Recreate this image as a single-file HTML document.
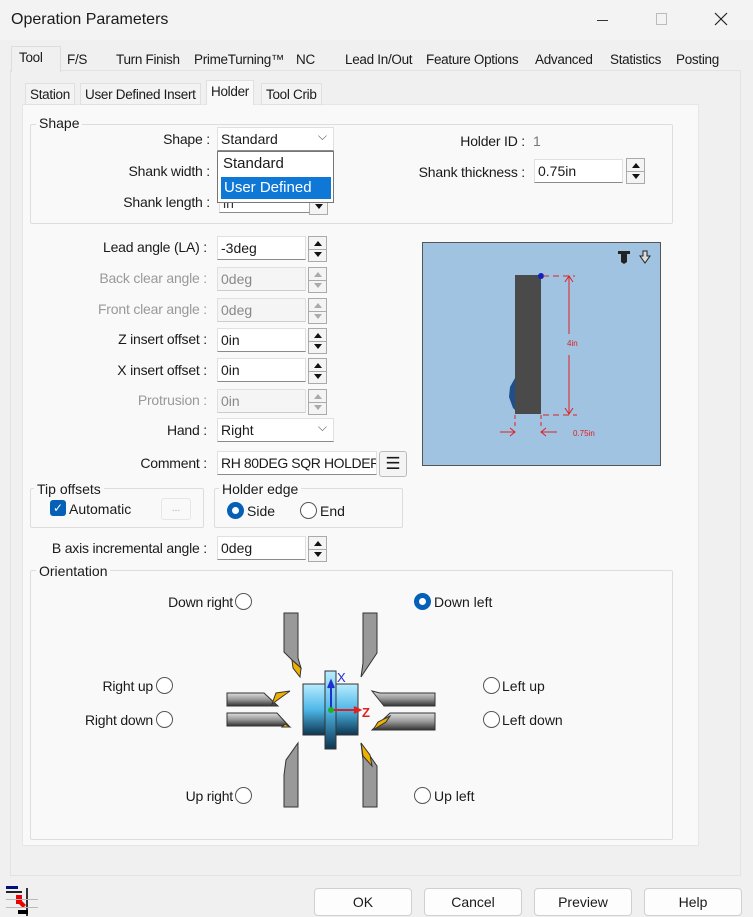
<!DOCTYPE html><html><head><style>
*{box-sizing:border-box}
body{margin:0;width:753px;height:917px;background:#f0f0f0;font-family:"Liberation Sans",sans-serif;font-size:14px;color:#1a1a1a;position:relative;overflow:hidden}
.a{position:absolute;white-space:nowrap}
.in{position:absolute;background:#fff;border:1px solid #e0e0e0;border-bottom:1px solid #8a8a8a;height:24px;padding:3px 3px;font-size:14px;white-space:nowrap;overflow:hidden}
.dis{background:#f5f5f5;color:#888;border-bottom-color:#ccc}
.sp{position:absolute;width:19px;height:26px;border:1px solid #aaa;background:#f4f4f4}
.sp:before,.sp:after{content:"";position:absolute;left:5px;border-left:4px solid transparent;border-right:4px solid transparent}
.sp:before{top:4px;border-bottom:5px solid #111}
.sp:after{bottom:4px;border-top:5px solid #111}
.sp i{position:absolute;left:0;right:0;top:12px;border-top:1px solid #aaa}
.sp.d:before{border-bottom-color:#aaa}.sp.d:after{border-top-color:#aaa}
.g{position:absolute;border:1px solid #ddd;border-radius:2px}
.gl{position:absolute;background:#f9f9f9;padding:0 3px;top:-10px;left:5px}
.rad{position:absolute;width:17px;height:17px;border-radius:50%;border:1px solid #555;background:#fff}
.rad.on{border:5px solid #0560b8}
.tab{position:absolute;top:49px;height:22px;padding:3px 4px;font-size:13.5px;letter-spacing:-0.3px}
.btn{position:absolute;top:888px;width:98px;height:28px;background:#fdfdfd;border:1px solid #d0d0d0;border-radius:4px;text-align:center;line-height:26px}
.lbl{position:absolute;text-align:right;white-space:nowrap;letter-spacing:-0.2px}
</style></head><body>
<div class="a" style="left:0;top:0;width:753px;height:40px;background:#f3f3f3"></div>
<div class="a" style="left:11px;top:11px;font-size:16px">Operation Parameters</div>
<div class="a" style="left:597px;top:20px;width:11px;border-top:1px solid #333"></div>
<div class="a" style="left:656px;top:13px;width:11px;height:12px;border:1px solid #bbb"></div>
<svg class="a" style="left:714px;top:12px" width="14" height="14"><path d="M1 1L13 13M13 1L1 13" stroke="#222" stroke-width="1.2"/></svg>

<div class="a" style="left:10px;top:70px;width:731px;height:806px;background:#f0f0f0;border:1px solid #e3e3e3"></div>
<div class="tab" style="left:11px;top:46px;height:26px;background:#f0f0f0;border:1px solid #ddd;border-bottom:none;padding-left:7px;width:50px">Tool</div>
<div class="tab" style="left:63px">F/S</div>
<div class="tab" style="left:112px">Turn Finish</div>
<div class="tab" style="left:190px">PrimeTurning™</div>
<div class="tab" style="left:292px">NC</div>
<div class="tab" style="left:341px">Lead In/Out</div>
<div class="tab" style="left:422px">Feature Options</div>
<div class="tab" style="left:531px">Advanced</div>
<div class="tab" style="left:606px">Statistics</div>
<div class="tab" style="left:672px">Posting</div>

<div class="a" style="left:22px;top:104px;width:677px;height:742px;background:#f9f9f9;border:1px solid #e6e6e6"></div>
<div class="tab" style="left:25px;top:83px;border:1px solid #e0e0e0;background:#f3f3f3">Station</div>
<div class="tab" style="left:80px;top:83px;border:1px solid #e0e0e0;background:#f3f3f3">User Defined Insert</div>
<div class="tab" style="left:206px;top:80px;height:25px;background:#f9f9f9;border:1px solid #e0e0e0;border-bottom:none">Holder</div>
<div class="tab" style="left:261px;top:83px;border:1px solid #e0e0e0;background:#f3f3f3">Tool Crib</div>

<div class="g" style="left:30px;top:124px;width:643px;height:100px"><div class="gl">Shape</div></div>
<div class="lbl" style="left:100px;width:110px;top:131px">Shape :</div>
<div class="in" style="left:217px;top:127px;width:117px">Standard<span style="position:absolute;right:6px;top:1px;font-size:12px;color:#555">⌵</span></div>
<div class="lbl" style="left:100px;width:110px;top:163px">Shank width :</div>
<div class="lbl" style="left:100px;width:110px;top:194px">Shank length :</div>
<div class="in" style="left:219px;top:191px;width:92px;height:22px;color:#333">in</div>
<div class="a" style="left:309px;top:197px;width:19px;height:18px;border:1px solid #aaa;background:#f4f4f4"><div style="position:absolute;left:5px;top:6px;border-left:4px solid transparent;border-right:4px solid transparent;border-top:5px solid #111"></div></div>
<div class="a" style="left:217px;top:151px;width:117px;height:52px;background:#fff;border:1px solid #777">
<div class="a" style="left:5px;top:3px;font-size:15px">Standard</div>
<div class="a" style="left:3px;top:25px;width:110px;height:22px;background:#0f78d7;color:#fff;font-size:15px;padding:2px 3px">User Defined</div></div>
<div class="lbl" style="left:420px;width:105px;top:133px">Holder ID :</div>
<div class="a" style="left:533px;top:133px;color:#777">1</div>
<div class="lbl" style="left:400px;width:125px;top:164px">Shank thickness :</div>
<div class="in" style="left:534px;top:159px;width:89px">0.75in</div>
<div class="sp" style="left:626px;top:158px"><i></i></div>

<div class="lbl" style="left:60px;width:147px;top:239px">Lead angle (LA) :</div>
<div class="in" style="left:217px;top:236px;width:89px">-3deg</div><div class="sp" style="left:308px;top:236px"><i></i></div>
<div class="lbl" style="left:60px;width:147px;top:270px;color:#999">Back clear angle :</div>
<div class="in dis" style="left:217px;top:267px;width:89px">0deg</div><div class="sp d" style="left:308px;top:267px"><i></i></div>
<div class="lbl" style="left:60px;width:147px;top:301px;color:#999">Front clear angle :</div>
<div class="in dis" style="left:217px;top:298px;width:89px">0deg</div><div class="sp d" style="left:308px;top:298px"><i></i></div>
<div class="lbl" style="left:60px;width:147px;top:331px">Z insert offset :</div>
<div class="in" style="left:217px;top:328px;width:89px">0in</div><div class="sp" style="left:308px;top:328px"><i></i></div>
<div class="lbl" style="left:60px;width:147px;top:362px">X insert offset :</div>
<div class="in" style="left:217px;top:358px;width:89px">0in</div><div class="sp" style="left:308px;top:358px"><i></i></div>
<div class="lbl" style="left:60px;width:147px;top:392px;color:#999">Protrusion :</div>
<div class="in dis" style="left:217px;top:389px;width:89px">0in</div><div class="sp d" style="left:308px;top:389px"><i></i></div>
<div class="lbl" style="left:60px;width:147px;top:422px">Hand :</div>
<div class="in" style="left:217px;top:418px;width:117px">Right<span style="position:absolute;right:6px;top:1px;font-size:12px;color:#555">⌵</span></div>
<div class="lbl" style="left:60px;width:147px;top:455px">Comment :</div>
<div class="in" style="left:217px;top:451px;width:160px;letter-spacing:-0.4px">RH 80DEG SQR HOLDER</div>
<div class="a" style="left:379px;top:451px;width:28px;height:26px;border:1px solid #bbb;background:#f4f4f4;border-radius:3px;text-align:center;font-size:17px;line-height:23px">☰</div>

<svg class="a" style="left:422px;top:242px" width="239" height="224">
<rect x="0.5" y="0.5" width="238" height="223" fill="#9fc3e0" stroke="#555"/>
<rect x="93" y="33" width="26" height="139" fill="#4a4a4a"/>
<path d="M93 136 L88 145 L87 155 L91 166 L93 168Z" fill="#1f4e8a"/>
<circle cx="119" cy="34" r="3" fill="#1020c0"/>
<g stroke="#e02020" fill="none" stroke-width="1">
<path d="M121 34 H153 M121 173 H155" stroke-dasharray="6 4"/>
<path d="M147 34 V92 M147 113 V172 M143 40 L147 34 L151 40 M143 166 L147 172 L151 166"/>
<path d="M93 173 V184 M119 173 V184" stroke-dasharray="4 3"/>
<path d="M78 190 H93 M88 186 L93 190 L88 194 M119 190 H135 M124 186 L119 190 L124 194"/></g>
<text x="145" y="104" font-size="8" fill="#e02020" font-family="Liberation Sans">4in</text>
<text x="151" y="194" font-size="8" fill="#e02020" font-family="Liberation Sans">0.75in</text>
<g fill="#222"><path d="M196 9 H208 V12 H205 V20 L202 22 L199 20 V12 H196Z"/><path d="M221 9 h4 v5 h3 l-5 7 -5 -7 h3z" fill="#ddd" stroke="#222"/></g>
</svg>

<div class="g" style="left:30px;top:488px;width:174px;height:40px"><div class="gl" style="left:3px;top:-8px">Tip offsets</div></div>
<div class="a" style="left:50px;top:500px;width:16px;height:16px;background:#0560b8;border-radius:3px;color:#fff;font-size:12px;text-align:center;line-height:16px">✓</div>
<div class="a" style="left:69px;top:501px">Automatic</div>
<div class="a" style="left:161px;top:498px;width:30px;height:22px;border:1px solid #e6e6e6;border-radius:3px;color:#aaa;font-size:10px;text-align:center;line-height:20px">...</div>
<div class="g" style="left:214px;top:488px;width:189px;height:40px"><div class="gl" style="left:4px;top:-8px">Holder edge</div></div>
<div class="rad on" style="left:227px;top:502px"></div><div class="a" style="left:247px;top:503px">Side</div>
<div class="rad" style="left:300px;top:502px"></div><div class="a" style="left:320px;top:503px">End</div>
<div class="lbl" style="left:40px;width:167px;top:540px">B axis incremental angle :</div>
<div class="in" style="left:217px;top:536px;width:89px">0deg</div><div class="sp" style="left:308px;top:536px"><i></i></div>

<div class="g" style="left:30px;top:570px;width:643px;height:270px"><div class="gl" style="left:5px;top:-8px">Orientation</div></div>
<div class="lbl" style="left:130px;width:103px;top:594px">Down right</div><div class="rad" style="left:235px;top:593px"></div>
<div class="rad on" style="left:414px;top:593px"></div><div class="a" style="left:434px;top:594px">Down left</div>
<div class="lbl" style="left:60px;width:93px;top:678px">Right up</div><div class="rad" style="left:156px;top:677px"></div>
<div class="lbl" style="left:60px;width:93px;top:712px">Right down</div><div class="rad" style="left:156px;top:711px"></div>
<div class="rad" style="left:483px;top:677px"></div><div class="a" style="left:502px;top:678px">Left up</div>
<div class="rad" style="left:483px;top:711px"></div><div class="a" style="left:502px;top:712px">Left down</div>
<div class="lbl" style="left:130px;width:103px;top:788px">Up right</div><div class="rad" style="left:235px;top:787px"></div>
<div class="rad" style="left:414px;top:787px"></div><div class="a" style="left:434px;top:788px">Up left</div>

<svg class="a" style="left:200px;top:580px" width="260" height="240">
<defs><linearGradient id="cy" x1="0" y1="0" x2="0" y2="1"><stop offset="0" stop-color="#b8ecff"/><stop offset="0.5" stop-color="#4fb8e8"/><stop offset="1" stop-color="#0d3550"/></linearGradient>
<linearGradient id="bar" x1="0" y1="0" x2="0" y2="1"><stop offset="0" stop-color="#ddd"/><stop offset="0.5" stop-color="#999"/><stop offset="1" stop-color="#333"/></linearGradient></defs>
<g stroke="#333" stroke-width="1">
<path d="M84 33 H98 V78 L101 88 L92 80 L84 72Z" fill="#999"/><path d="M92 80 L101 88 L100 97 L93 88Z" fill="#f0b000"/>
<path d="M163 33 H177 V73 L161 97 L163 83Z" fill="#999"/>
<path d="M84 227 H98 V163 L86 180 L84 195Z" fill="#999"/>
<path d="M163 227 H177 V186 L161 163 L163 180Z" fill="#999"/><path d="M161 163 L170 175 L172 186 L163 176Z" fill="#f0b000"/>
<path d="M27 113 H64 L78 126 H27Z" fill="url(#bar)"/><path d="M27 133 H77 L89 146 H27Z" fill="url(#bar)"/>
<path d="M72 124 L90 111 L76 113Z" fill="#f0b000"/><path d="M85 144 L90 147 L82 147Z" fill="#f0b000"/>
<path d="M235 113 H180 L172 111 L184 126 H235Z" fill="url(#bar)"/><path d="M235 133 H190 L172 150 H235Z" fill="url(#bar)"/>
<path d="M173 150 L186 142 L190 136 L178 142Z" fill="#f0b000"/>
<rect x="103" y="104" width="55" height="51" fill="url(#cy)"/><rect x="125" y="91" width="11" height="78" fill="url(#cy)"/>
</g>
<path d="M131 130 V104 M128 108 L131 101 L134 108" stroke="#2030d0" stroke-width="2" fill="#2030d0"/>
<path d="M131 130 H158 M154 127 L160 130 L154 133" stroke="#e02020" stroke-width="2" fill="#e02020"/>
<circle cx="131" cy="130" r="3" fill="#20b020"/>
<text x="137" y="102" fill="#2030d0" font-size="13" font-family="Liberation Sans">X</text>
<text x="162" y="137" fill="#e02020" font-size="13" font-family="Liberation Sans" font-weight="bold">Z</text>
</svg>

<svg class="a" style="left:4px;top:885px" width="36" height="32"><rect x="2" y="1" width="12" height="3" fill="#001080"/><rect x="2" y="6" width="16" height="2" fill="#222"/><path d="M12 10 h6 v6 l4 4 -3 3 -4 -4 h-3z" fill="#e00"/><rect x="22" y="3" width="2" height="28" fill="#333"/><rect x="14" y="25" width="10" height="4" fill="#000"/><rect x="2" y="14" width="32" height="1" fill="#bbb"/><rect x="2" y="22" width="32" height="1" fill="#bbb"/></svg>
<div class="btn" style="left:314px">OK</div>
<div class="btn" style="left:424px">Cancel</div>
<div class="btn" style="left:534px">Preview</div>
<div class="btn" style="left:644px">Help</div>
</body></html>
